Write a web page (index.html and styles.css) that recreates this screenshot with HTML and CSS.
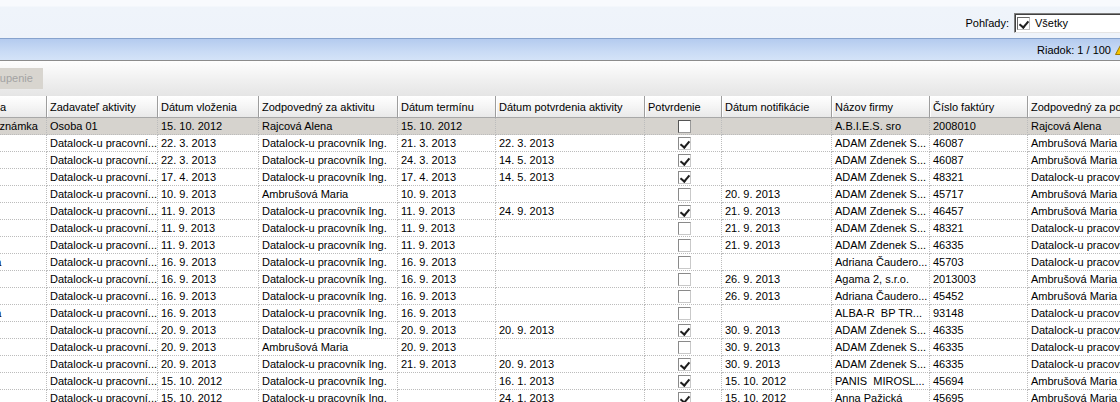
FILE: index.html
```html
<!DOCTYPE html>
<html lang="sk">
<head>
  <meta charset="UTF-8">
  <title>Aktivity</title>
  <link rel="stylesheet" href="styles.css">
</head>
<body>
  <div class="views-bar">
    <span class="views-label">Pohľady:</span>
    <div class="combo">
      <span class="chk on"></span>
      <span class="combo-text">Všetky</span>
    </div>
  </div>

  <div class="status-bar">
    <span>Riadok: 1 / 100</span>
    <svg class="warn" width="14" height="13" viewBox="0 0 14 13">
      <path d="M7 0.5 L13.5 12.5 L0.5 12.5 Z" fill="#f5c400" stroke="#a07a00"/>
      <rect x="6.3" y="4" width="1.4" height="5" fill="#222"/>
      <rect x="6.3" y="10" width="1.4" height="1.4" fill="#222"/>
    </svg>
  </div>

  <div class="toolbar">
    <span class="btn disabled">Zoskupenie</span>
  </div>

  <div class="grid">
    <div class="row head">
      <div class="cell">Osa</div>
      <div class="cell">Zadavateľ aktivity</div>
      <div class="cell">Dátum vloženia</div>
      <div class="cell">Zodpovedný za aktivitu</div>
      <div class="cell">Dátum termínu</div>
      <div class="cell">Dátum potvrdenia aktivity</div>
      <div class="cell">Potvrdenie</div>
      <div class="cell">Dátum notifikácie</div>
      <div class="cell">Názov firmy</div>
      <div class="cell">Číslo faktúry</div>
      <div class="cell">Zodpovedný za poskytnutie</div>
    </div>

    <div class="row selected">
      <div class="cell">Poznámka</div>
      <div class="cell">Osoba 01</div>
      <div class="cell">15. 10. 2012</div>
      <div class="cell">Rajcová Alena</div>
      <div class="cell">15. 10. 2012</div>
      <div class="cell"></div>
      <div class="cell chk-cell"><span class="chk dark"></span></div>
      <div class="cell"></div>
      <div class="cell">A.B.I.E.S. sro</div>
      <div class="cell">2008010</div>
      <div class="cell">Rajcová Alena</div>
    </div>
    <div class="row">
      <div class="cell"></div>
      <div class="cell">Datalock-u pracovní...</div>
      <div class="cell">22. 3. 2013</div>
      <div class="cell">Datalock-u pracovník Ing.</div>
      <div class="cell">21. 3. 2013</div>
      <div class="cell">22. 3. 2013</div>
      <div class="cell chk-cell"><span class="chk on"></span></div>
      <div class="cell"></div>
      <div class="cell">ADAM Zdenek S...</div>
      <div class="cell">46087</div>
      <div class="cell">Ambrušová Maria</div>
    </div>
    <div class="row">
      <div class="cell"></div>
      <div class="cell">Datalock-u pracovní...</div>
      <div class="cell">22. 3. 2013</div>
      <div class="cell">Datalock-u pracovník Ing.</div>
      <div class="cell">24. 3. 2013</div>
      <div class="cell">14. 5. 2013</div>
      <div class="cell chk-cell"><span class="chk on"></span></div>
      <div class="cell"></div>
      <div class="cell">ADAM Zdenek S...</div>
      <div class="cell">46087</div>
      <div class="cell">Ambrušová Maria</div>
    </div>
    <div class="row">
      <div class="cell"></div>
      <div class="cell">Datalock-u pracovní...</div>
      <div class="cell">17. 4. 2013</div>
      <div class="cell">Datalock-u pracovník Ing.</div>
      <div class="cell">17. 4. 2013</div>
      <div class="cell">14. 5. 2013</div>
      <div class="cell chk-cell"><span class="chk on"></span></div>
      <div class="cell"></div>
      <div class="cell">ADAM Zdenek S...</div>
      <div class="cell">48321</div>
      <div class="cell">Datalock-u pracovník Ing.</div>
    </div>
    <div class="row">
      <div class="cell"></div>
      <div class="cell">Datalock-u pracovní...</div>
      <div class="cell">10. 9. 2013</div>
      <div class="cell">Ambrušová Maria</div>
      <div class="cell">10. 9. 2013</div>
      <div class="cell"></div>
      <div class="cell chk-cell"><span class="chk"></span></div>
      <div class="cell">20. 9. 2013</div>
      <div class="cell">ADAM Zdenek S...</div>
      <div class="cell">45717</div>
      <div class="cell">Ambrušová Maria</div>
    </div>
    <div class="row">
      <div class="cell"></div>
      <div class="cell">Datalock-u pracovní...</div>
      <div class="cell">11. 9. 2013</div>
      <div class="cell">Datalock-u pracovník Ing.</div>
      <div class="cell">11. 9. 2013</div>
      <div class="cell">24. 9. 2013</div>
      <div class="cell chk-cell"><span class="chk on"></span></div>
      <div class="cell">21. 9. 2013</div>
      <div class="cell">ADAM Zdenek S...</div>
      <div class="cell">46457</div>
      <div class="cell">Ambrušová Maria</div>
    </div>
    <div class="row">
      <div class="cell"></div>
      <div class="cell">Datalock-u pracovní...</div>
      <div class="cell">11. 9. 2013</div>
      <div class="cell">Datalock-u pracovník Ing.</div>
      <div class="cell">11. 9. 2013</div>
      <div class="cell"></div>
      <div class="cell chk-cell"><span class="chk"></span></div>
      <div class="cell">21. 9. 2013</div>
      <div class="cell">ADAM Zdenek S...</div>
      <div class="cell">48321</div>
      <div class="cell">Datalock-u pracovník Ing.</div>
    </div>
    <div class="row">
      <div class="cell"></div>
      <div class="cell">Datalock-u pracovní...</div>
      <div class="cell">11. 9. 2013</div>
      <div class="cell">Datalock-u pracovník Ing.</div>
      <div class="cell">11. 9. 2013</div>
      <div class="cell"></div>
      <div class="cell chk-cell"><span class="chk"></span></div>
      <div class="cell">21. 9. 2013</div>
      <div class="cell">ADAM Zdenek S...</div>
      <div class="cell">46335</div>
      <div class="cell">Datalock-u pracovník Ing.</div>
    </div>
    <div class="row">
      <div class="cell">Iná</div>
      <div class="cell">Datalock-u pracovní...</div>
      <div class="cell">16. 9. 2013</div>
      <div class="cell">Datalock-u pracovník Ing.</div>
      <div class="cell">16. 9. 2013</div>
      <div class="cell"></div>
      <div class="cell chk-cell"><span class="chk"></span></div>
      <div class="cell"></div>
      <div class="cell">Adriana Čaudero...</div>
      <div class="cell">45703</div>
      <div class="cell">Datalock-u pracovník Ing.</div>
    </div>
    <div class="row">
      <div class="cell"></div>
      <div class="cell">Datalock-u pracovní...</div>
      <div class="cell">16. 9. 2013</div>
      <div class="cell">Datalock-u pracovník Ing.</div>
      <div class="cell">16. 9. 2013</div>
      <div class="cell"></div>
      <div class="cell chk-cell"><span class="chk"></span></div>
      <div class="cell">26. 9. 2013</div>
      <div class="cell">Agama 2, s.r.o.</div>
      <div class="cell">2013003</div>
      <div class="cell">Ambrušová Maria</div>
    </div>
    <div class="row">
      <div class="cell"></div>
      <div class="cell">Datalock-u pracovní...</div>
      <div class="cell">16. 9. 2013</div>
      <div class="cell">Datalock-u pracovník Ing.</div>
      <div class="cell">16. 9. 2013</div>
      <div class="cell"></div>
      <div class="cell chk-cell"><span class="chk"></span></div>
      <div class="cell">26. 9. 2013</div>
      <div class="cell">Adriana Čaudero...</div>
      <div class="cell">45452</div>
      <div class="cell">Ambrušová Maria</div>
    </div>
    <div class="row">
      <div class="cell">Iná</div>
      <div class="cell">Datalock-u pracovní...</div>
      <div class="cell">16. 9. 2013</div>
      <div class="cell">Datalock-u pracovník Ing.</div>
      <div class="cell">16. 9. 2013</div>
      <div class="cell"></div>
      <div class="cell chk-cell"><span class="chk"></span></div>
      <div class="cell"></div>
      <div class="cell">ALBA-R  BP TR...</div>
      <div class="cell">93148</div>
      <div class="cell">Datalock-u pracovník Ing.</div>
    </div>
    <div class="row">
      <div class="cell"></div>
      <div class="cell">Datalock-u pracovní...</div>
      <div class="cell">20. 9. 2013</div>
      <div class="cell">Datalock-u pracovník Ing.</div>
      <div class="cell">20. 9. 2013</div>
      <div class="cell">20. 9. 2013</div>
      <div class="cell chk-cell"><span class="chk on"></span></div>
      <div class="cell">30. 9. 2013</div>
      <div class="cell">ADAM Zdenek S...</div>
      <div class="cell">46335</div>
      <div class="cell">Datalock-u pracovník Ing.</div>
    </div>
    <div class="row">
      <div class="cell"></div>
      <div class="cell">Datalock-u pracovní...</div>
      <div class="cell">20. 9. 2013</div>
      <div class="cell">Ambrušová Maria</div>
      <div class="cell">20. 9. 2013</div>
      <div class="cell"></div>
      <div class="cell chk-cell"><span class="chk"></span></div>
      <div class="cell">30. 9. 2013</div>
      <div class="cell">ADAM Zdenek S...</div>
      <div class="cell">46335</div>
      <div class="cell">Datalock-u pracovník Ing.</div>
    </div>
    <div class="row">
      <div class="cell"></div>
      <div class="cell">Datalock-u pracovní...</div>
      <div class="cell">20. 9. 2013</div>
      <div class="cell">Datalock-u pracovník Ing.</div>
      <div class="cell">21. 9. 2013</div>
      <div class="cell">20. 9. 2013</div>
      <div class="cell chk-cell"><span class="chk on"></span></div>
      <div class="cell">30. 9. 2013</div>
      <div class="cell">ADAM Zdenek S...</div>
      <div class="cell">46335</div>
      <div class="cell">Datalock-u pracovník Ing.</div>
    </div>
    <div class="row">
      <div class="cell"></div>
      <div class="cell">Datalock-u pracovní...</div>
      <div class="cell">15. 10. 2012</div>
      <div class="cell">Datalock-u pracovník Ing.</div>
      <div class="cell"></div>
      <div class="cell">16. 1. 2013</div>
      <div class="cell chk-cell"><span class="chk on"></span></div>
      <div class="cell">15. 10. 2012</div>
      <div class="cell">PANIS  MIROSL...</div>
      <div class="cell">45694</div>
      <div class="cell">Ambrušová Maria</div>
    </div>
    <div class="row">
      <div class="cell"></div>
      <div class="cell">Datalock-u pracovní...</div>
      <div class="cell">15. 10. 2012</div>
      <div class="cell">Datalock-u pracovník Ing.</div>
      <div class="cell"></div>
      <div class="cell">24. 1. 2013</div>
      <div class="cell chk-cell"><span class="chk on"></span></div>
      <div class="cell">15. 10. 2012</div>
      <div class="cell">Anna Pažická</div>
      <div class="cell">45695</div>
      <div class="cell">Ambrušová Maria</div>
    </div>
  </div>
</body>
</html>
```

FILE: styles.css
```css
* {
  box-sizing: border-box;
}

html, body {
  margin: 0;
  padding: 0;
}

body {
  width: 1120px;
  height: 402px;
  overflow: hidden;
  background: #fff;
  color: #000;
  font-family: "Liberation Sans", Arial, sans-serif;
  font-size: 11px;
}

/* top strip with the views combo */
.views-bar {
  height: 38px;
  padding-top: 13px;
  display: flex;
  justify-content: flex-end;
  align-items: flex-start;
  gap: 5px;
  background: linear-gradient(#f8fafd 0, #f8fafd 6px, #eff4fa 7px, #eef3fa 100%);
}

.views-label {
  line-height: 20px;
}

.combo {
  width: 120px;
  height: 20px;
  margin-right: -14px;
  padding-left: 2px;
  display: flex;
  align-items: center;
  gap: 5px;
  background: #fff;
  border: 1px solid;
  border-color: #808080 #e4e4e4 #e4e4e4 #808080;
  box-shadow: inset 1px 1px 0 #404040;
}

.combo-text {
  line-height: 16px;
}

/* blue row counter bar */
.status-bar {
  height: 23px;
  display: flex;
  justify-content: flex-end;
  align-items: center;
  gap: 4px;
  border-top: 1px solid #87a3cd;
  border-bottom: 1px solid #8c8c8c;
  background: linear-gradient(#b4cbef, #c9dbf5 60%, #d4e3f8);
}

.warn {
  margin-right: -9px;
  margin-top: -2px;
}

/* toolbar */
.toolbar {
  height: 35px;
  padding-top: 7px;
  background: linear-gradient(#fefefe, #f1f1f1 50%, #e5e5e5);
}

.btn {
  display: inline-block;
  height: 21px;
  line-height: 21px;
  padding: 0 10px;
  margin-left: -34px;
  background: #d8d5cf;
}

.btn.disabled {
  color: #a3a3a3;
}

/* data grid, scrolled a little to the right */
.grid {
  margin-left: -17px;
}

.row {
  display: grid;
  grid-template-columns: 64px 111px 101px 139px 98px 149px 77px 110px 98px 98px 170px;
  height: 17px;
}

.cell {
  padding: 0 0 0 3px;
  line-height: 16px;
  white-space: pre;
  overflow: hidden;
  border-right: 1px dotted #bcbcbc;
  border-bottom: 1px dotted #bcbcbc;
}

.row.head {
  height: 22px;
}

.row.head .cell {
  padding-top: 2px;
  line-height: 19px;
  background: linear-gradient(#ffffff, #f6f6f6 45%, #e9e9e9);
  border-right: 1px solid #9d9d9d;
  border-bottom: 1px solid #a8a8a8;
  box-shadow: inset 1px 0 0 #fff;
}

.row.selected {
  background: #d6d3ce;
}

.row.selected .cell {
  padding-top: 1px;
  line-height: 15px;
}

.chk-cell {
  display: flex;
  justify-content: center;
  align-items: center;
}

.chk {
  position: relative;
  display: inline-block;
  width: 13px;
  height: 13px;
  background: #fff;
  border: 1px solid;
  border-color: #8a8a8a #c9c9c9 #c9c9c9 #8a8a8a;
}

.chk.dark {
  border-color: #555 #9a9a9a #9a9a9a #555;
}

.chk.on::after {
  content: "";
  position: absolute;
  left: 3px;
  top: 1px;
  width: 4px;
  height: 7px;
  border: solid #1e1e1e;
  border-width: 0 2px 2px 0;
  transform: rotate(40deg);
}

.combo .chk {
  border-color: #666 #bbb #bbb #666;
}
```
